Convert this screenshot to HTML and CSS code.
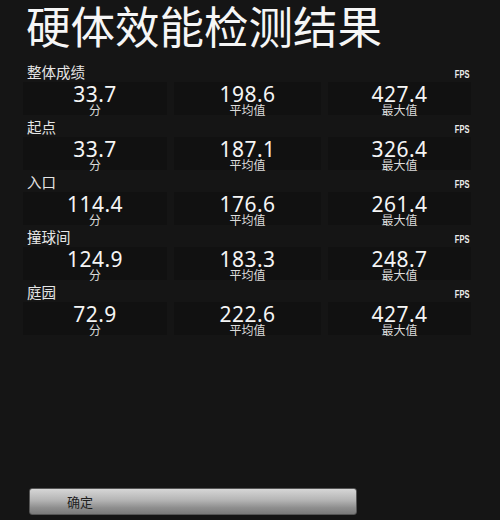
FILE: index.html
```html
<!DOCTYPE html>
<html lang="zh">
<head>
<meta charset="utf-8">
<link rel="stylesheet" href="styles.css">
</head>
<body>
<div class="screen">
  <h1 class="title">硬体效能检测结果</h1>
  <div class="results">
    <section class="group">
      <div class="group-head"><span class="label">整体成绩</span><span class="fps">FPS</span></div>
      <div class="cells">
        <div class="cell"><span class="num">33.7</span><span class="unit">分</span></div>
        <div class="cell"><span class="num">198.6</span><span class="unit">平均值</span></div>
        <div class="cell"><span class="num">427.4</span><span class="unit">最大值</span></div>
      </div>
    </section>
    <section class="group">
      <div class="group-head"><span class="label">起点</span><span class="fps">FPS</span></div>
      <div class="cells">
        <div class="cell"><span class="num">33.7</span><span class="unit">分</span></div>
        <div class="cell"><span class="num">187.1</span><span class="unit">平均值</span></div>
        <div class="cell"><span class="num">326.4</span><span class="unit">最大值</span></div>
      </div>
    </section>
    <section class="group">
      <div class="group-head"><span class="label">入口</span><span class="fps">FPS</span></div>
      <div class="cells">
        <div class="cell"><span class="num">114.4</span><span class="unit">分</span></div>
        <div class="cell"><span class="num">176.6</span><span class="unit">平均值</span></div>
        <div class="cell"><span class="num">261.4</span><span class="unit">最大值</span></div>
      </div>
    </section>
    <section class="group">
      <div class="group-head"><span class="label">撞球间</span><span class="fps">FPS</span></div>
      <div class="cells">
        <div class="cell"><span class="num">124.9</span><span class="unit">分</span></div>
        <div class="cell"><span class="num">183.3</span><span class="unit">平均值</span></div>
        <div class="cell"><span class="num">248.7</span><span class="unit">最大值</span></div>
      </div>
    </section>
    <section class="group">
      <div class="group-head"><span class="label">庭园</span><span class="fps">FPS</span></div>
      <div class="cells">
        <div class="cell"><span class="num">72.9</span><span class="unit">分</span></div>
        <div class="cell"><span class="num">222.6</span><span class="unit">平均值</span></div>
        <div class="cell"><span class="num">427.4</span><span class="unit">最大值</span></div>
      </div>
    </section>
  </div>
  <div class="footer">
    <button class="ok">确定</button>
  </div>
</div>
</body>
</html>
```
FILE: styles.css
```css
html, body {
  margin: 0;
  padding: 0;
  background: #151515;
}
body {
  font-family: "Noto Sans", "Noto Sans CJK SC", sans-serif;
  color: #f2f2f2;
}
.screen {
  width: 500px;
  height: 520px;
  display: flex;
  flex-direction: column;
  overflow: hidden;
}
.title {
  margin: 0;
  padding: 0 0 0 26px;
  font-family: "Noto Sans CJK SC", sans-serif;
  font-weight: 400;
  font-size: 44.5px;
  line-height: 50px;
  color: #f6f6f6;
}
.results {
  display: flex;
  flex-direction: column;
  gap: 3px;
  padding: 13px 29px 0 23px;
}
.group {
  display: flex;
  flex-direction: column;
}
.group-head {
  display: flex;
  justify-content: space-between;
  align-items: flex-start;
  height: 19px;
  padding-left: 4px;
  padding-right: 2px;
}
.label {
  font-family: "Noto Sans CJK SC", sans-serif;
  font-size: 14.5px;
  line-height: 17px;
  color: #e6e6e6;
}
.fps {
  font-family: "Liberation Sans", sans-serif;
  font-weight: 700;
  font-size: 11px;
  line-height: 12px;
  margin-top: 5px;
  color: #ececec;
  transform: scaleX(0.68);
  transform-origin: right center;
}
.cells {
  display: grid;
  grid-template-columns: 144px 147px 143px;
  column-gap: 7px;
}
.cell {
  background: #111111;
  height: 33px;
  display: flex;
  flex-direction: column;
  align-items: center;
}
.num {
  font-size: 21px;
  line-height: 17px;
  margin-top: 4px;
  color: #f5f5f5;
  letter-spacing: 0.5px;
}
.unit {
  font-family: "Noto Sans CJK SC", sans-serif;
  font-size: 12px;
  line-height: 12px;
  margin-top: 1px;
  color: #dcdcdc;
}
.footer {
  margin-top: auto;
  padding: 0 0 5px 29px;
}
.ok {
  width: 328px;
  height: 27px;
  border: 1px solid #555;
  border-radius: 3px;
  background: linear-gradient(#d6d6d6 0%, #b4b4b4 45%, #8e8e8e 75%, #7a7a7a 100%);
  font-family: "Noto Sans CJK SC", sans-serif;
  font-size: 13px;
  color: #1e1e1e;
  text-align: left;
  padding: 0 0 0 37px;
  display: block;
}
```
